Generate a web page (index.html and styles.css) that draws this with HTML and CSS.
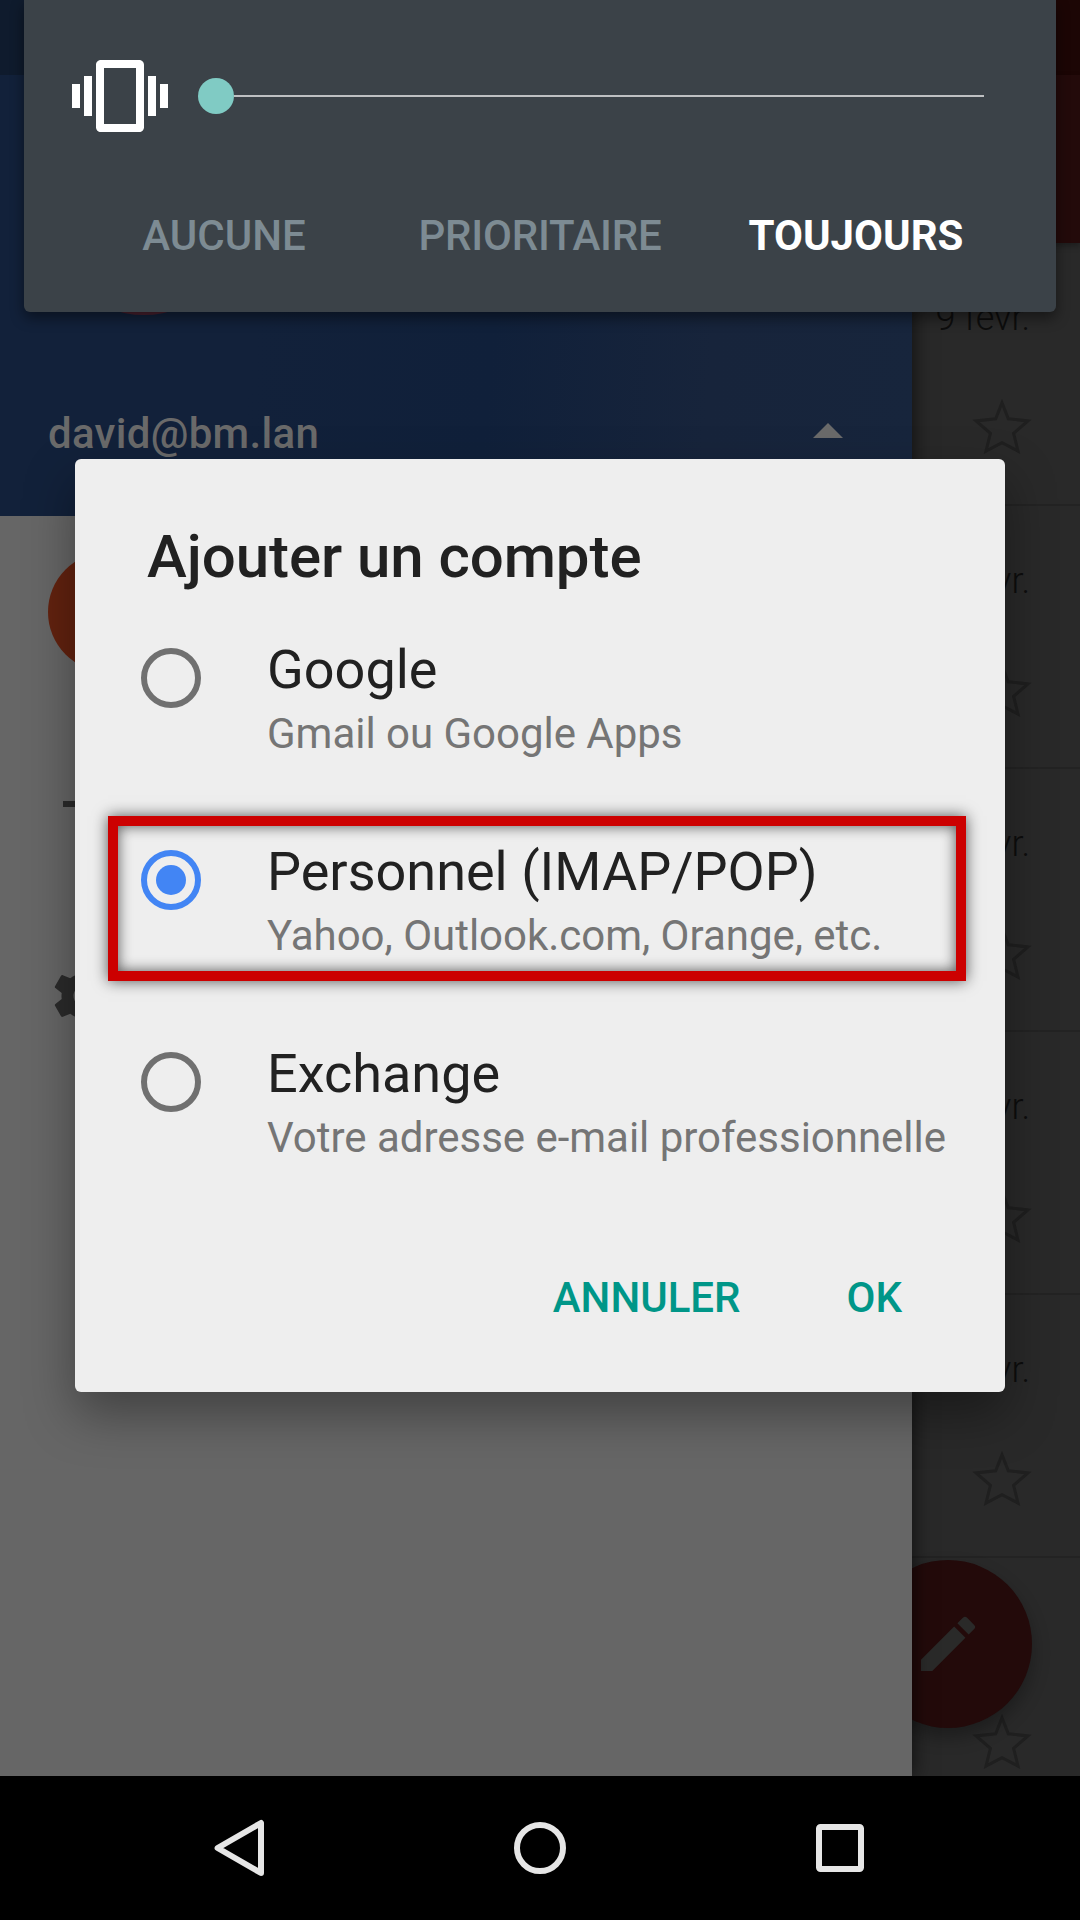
FILE: index.html
```html
<!DOCTYPE html>
<html lang="fr">
<head>
<meta charset="utf-8">
<title>Ajouter un compte</title>
<link rel="stylesheet" href="styles.css">
</head>
<body>
<svg class="defs" aria-hidden="true">
  <symbol id="star" viewBox="0 0 72 72">
    <path d="M36 11.800 42.300 27.800 62 29.900 47.600 42.400 52 60 36 51.600 20 60 24.400 42.400 10 29.900 29.700 27.800Z" fill="none" stroke="#1f1f1f" stroke-width="3" stroke-miterlimit="10"/>
  </symbol>
</svg>
<div class="screen">
  <main class="mail">
    <div class="status-strip"></div>
    <div class="toolbar"></div>
    <ul class="messages">
      <li class="message"><span class="date">9 févr.</span><svg class="star"><use href="#star"/></svg></li>
      <li class="message"><span class="date">9 févr.</span><svg class="star"><use href="#star"/></svg></li>
      <li class="message"><span class="date">9 févr.</span><svg class="star"><use href="#star"/></svg></li>
      <li class="message"><span class="date">9 févr.</span><svg class="star"><use href="#star"/></svg></li>
      <li class="message"><span class="date">9 févr.</span><svg class="star"><use href="#star"/></svg></li>
      <li class="message"><span class="date"></span><svg class="star"><use href="#star"/></svg></li>
    </ul>
    <div class="fab">
      <svg class="icon" viewBox="0 0 24 24"><path d="M3 17.25V21h3.75L17.81 9.94l-3.75-3.75L3 17.25zM20.71 7.04a1 1 0 0 0 0-1.41l-2.34-2.34a1 1 0 0 0-1.41 0l-1.83 1.83 3.75 3.75 1.83-1.83z" fill="#2a2a29"/></svg>
    </div>
  </main>

  <aside class="drawer">
    <header class="profile">
      <div class="profile-status"></div>
      <div class="avatar"></div>
      <div class="account">
        <span class="address">david@bm.lan</span>
        <svg class="caret" viewBox="0 0 30 15"><path d="M0 15 15 0l15 15z" fill="#6a6a6a"/></svg>
      </div>
    </header>
    <nav class="drawer-items">
      <div class="drawer-item"><span class="account-dot"></span></div>
      <div class="drawer-item"><svg class="icon" viewBox="0 0 24 24"><path d="M19 13h-6v6h-2v-6H5v-2h6V5h2v6h6v2z" fill="#2b2b2b"/></svg></div>
      <div class="drawer-item"><svg class="icon" viewBox="0 0 24 24"><path d="M19.43 12.98c.04-.32.07-.64.07-.98s-.03-.66-.07-.98l2.11-1.65c.19-.15.24-.42.12-.64l-2-3.46c-.12-.22-.39-.3-.61-.22l-2.49 1c-.52-.4-1.08-.73-1.69-.98l-.38-2.65C14.46 2.18 14.25 2 14 2h-4c-.25 0-.46.18-.49.42l-.38 2.65c-.61.25-1.17.59-1.69.98l-2.49-1c-.23-.09-.49 0-.61.22l-2 3.46c-.13.22-.07.49.12.64l2.11 1.65c-.04.32-.07.65-.07.98s.03.66.07.98l-2.11 1.65c-.19.15-.24.42-.12.64l2 3.46c.12.22.39.3.61.22l2.49-1c.52.4 1.08.73 1.69.98l.38 2.65c.03.24.24.42.49.42h4c.25 0 .46-.18.49-.42l.38-2.65c.61-.25 1.17-.59 1.69-.98l2.49 1c.23.09.49 0 .61-.22l2-3.46c.12-.22.07-.49-.12-.64l-2.11-1.65zM12 15.5c-1.93 0-3.5-1.57-3.5-3.5s1.57-3.5 3.5-3.5 3.5 1.57 3.5 3.5-1.57 3.5-3.5 3.5z" fill="#2b2b2b"/></svg></div>
    </nav>
  </aside>

  <section class="dialog" role="dialog">
    <h1 class="dialog-title">Ajouter un compte</h1>
    <div class="options">
      <div class="option">
        <span class="radio"></span>
        <div class="labels"><div class="name">Google</div><div class="hint">Gmail ou Google Apps</div></div>
      </div>
      <div class="option">
        <span class="radio checked"></span>
        <div class="labels"><div class="name">Personnel (IMAP/POP)</div><div class="hint">Yahoo, Outlook.com, Orange, etc.</div></div>
        <div class="highlight"></div>
      </div>
      <div class="option">
        <span class="radio"></span>
        <div class="labels"><div class="name">Exchange</div><div class="hint">Votre adresse e-mail professionnelle</div></div>
      </div>
    </div>
    <div class="actions"><span>ANNULER</span><span>OK</span></div>
  </section>

  <section class="volume">
    <div class="slider-row">
      <svg class="vibrate" viewBox="0 0 24 24"><path d="M0 15h2V9H0v6zm3 2h2V7H3v10zm19-8v6h2V9h-2zm-3 8h2V7h-2v10zM16.800 3H7.200C6.540 3 6 3.540 6 4.200v15.600C6 20.460 6.540 21 7.200 21h9.600c.66 0 1.200-.54 1.200-1.200V4.200C18 3.540 17.460 3 16.800 3zM16 19H8V5h8v14z" fill="#fff"/></svg>
      <div class="slider"><span class="thumb"></span><span class="track"></span></div>
    </div>
    <div class="modes">
      <span class="mode">AUCUNE</span>
      <span class="mode priority">PRIORITAIRE</span>
      <span class="mode active">TOUJOURS</span>
    </div>
  </section>

  <footer class="navbar">
    <svg class="nav-icon" viewBox="0 0 72 72"><path d="M57 11v50L13.600 36z" fill="none" stroke="#e6e6e6" stroke-width="6" stroke-linejoin="round"/></svg>
    <svg class="nav-icon" viewBox="0 0 72 72"><circle cx="36" cy="36" r="23" fill="none" stroke="#e6e6e6" stroke-width="6"/></svg>
    <svg class="nav-icon" viewBox="0 0 72 72"><rect x="15" y="15" width="42" height="42" rx="1.500" fill="none" stroke="#e6e6e6" stroke-width="6"/></svg>
  </footer>
</div>
</body>
</html>
```
FILE: styles.css
```css
* { box-sizing: border-box; }
body { margin: 0; background: #000; font-family: Roboto, "Liberation Sans", sans-serif; }
.defs { display: none; }
.screen { position: relative; width: 1080px; height: 1920px; overflow: hidden; display: flex; flex-direction: column; }
.icon { display: block; width: 72px; height: 72px; }

/* Mail list behind the drawer */
.mail { position: relative; height: 1776px; overflow: hidden; background: #292929; }
.status-strip { height: 75px; background: #1c0605; }
.toolbar { height: 168px; background: #230a0a; box-shadow: 0 3px 6px rgba(0, 0, 0, .3); }
.messages { list-style: none; margin: 0; padding: 0; }
.message { height: 263px; padding: 53px 42px 0 0; border-bottom: 2px solid #232323; display: flex; flex-direction: column; align-items: flex-end; }
.date { height: 44px; margin-right: 8px; font-size: 36px; line-height: 44px; font-weight: 300; color: #0d0d0d; }
.star { display: block; width: 72px; height: 72px; margin-top: 51px; flex: none; }
.fab { position: absolute; left: 864px; top: 1560px; width: 168px; height: 168px; border-radius: 50%; background: #230a0a; box-shadow: 0 9px 18px rgba(0, 0, 0, .3); display: flex; align-items: center; justify-content: center; }

/* Navigation drawer */
.drawer { position: absolute; left: 0; top: 0; width: 912px; height: 1776px; background: #666; box-shadow: 0 0 20px rgba(0, 0, 0, .7); clip-path: inset(0 -60px 0 0); }
.profile { height: 516px; background: linear-gradient(95deg, #12213a 0, #12213a 280px, #10203a 520px, #17243b 740px, #17253c 100%); display: flex; flex-direction: column; }
.profile-status { height: 75px; background: #0f1b2d; }
.avatar { width: 192px; height: 192px; margin: 48px 0 0 48px; border-radius: 50%; background: #4c2130; }
.account { display: flex; justify-content: space-between; align-items: center; height: 60px; margin: 89px 69px 0 48px; font-size: 42px; line-height: 60px; font-weight: 500; color: #6a6a6a; }
.address { letter-spacing: .3px; }
.caret { width: 30px; height: 15px; margin-bottom: 7px; }
.drawer-item { height: 192px; padding-left: 48px; display: flex; align-items: center; }
.account-dot { width: 120px; height: 120px; border-radius: 50%; background: #62220f; }

/* Account type dialog */
.dialog { position: absolute; left: 75px; top: 459px; width: 930px; height: 933px; border-radius: 6px; background: #eee; box-shadow: 0 22px 50px rgba(0, 0, 0, .36); padding-top: 63px; }
.dialog-title { margin: 0 0 0 72px; font-size: 60px; line-height: 70px; font-weight: 500; letter-spacing: -.07px; color: #212121; }
.options { margin-top: 42px; }
.option { position: relative; height: 202px; display: flex; align-items: flex-start; }
.radio { flex: none; width: 60px; height: 60px; margin: 14px 66px 0 66px; border: 6px solid #707070; border-radius: 50%; display: flex; align-items: center; justify-content: center; }
.radio.checked { border-color: #4285f4; }
.radio.checked::before { content: ""; width: 30px; height: 30px; border-radius: 50%; background: #4285f4; }
.labels { white-space: nowrap; }
.name { font-size: 54px; line-height: 72px; color: #212121; }
.hint { font-size: 42px; line-height: 56px; letter-spacing: -.02px; color: #757575; }
.highlight { position: absolute; left: 33px; top: -20px; width: 858px; height: 165px; border: 10px solid #c00; box-shadow: 0 0 14px rgba(0, 0, 0, .65), inset 0 0 14px rgba(0, 0, 0, .65); }
.actions { display: flex; justify-content: flex-end; gap: 106px; margin: 33px 103px 0 0; font-size: 42px; line-height: 50px; font-weight: 500; color: #009688; }

/* Volume panel */
.volume { position: absolute; left: 24px; top: 0; width: 1032px; height: 312px; border-radius: 0 0 6px 6px; background: #3b4248; box-shadow: 0 6px 14px rgba(0, 0, 0, .45); padding-top: 48px; }
.slider-row { display: flex; align-items: center; padding: 0 72px 0 48px; height: 96px; }
.vibrate { width: 96px; height: 96px; }
.slider { flex: 1; display: flex; align-items: center; margin-left: 30px; }
.thumb { width: 36px; height: 36px; border-radius: 50%; background: #80cbc4; }
.track { flex: 1; height: 2px; background: #bec0c2; }
.modes { display: grid; grid-template-columns: repeat(3, 316px); justify-content: center; margin-top: 67px; font-size: 42px; line-height: 50px; font-weight: 500; text-align: center; color: #7d8b93; }
.priority { letter-spacing: -.2px; }
.active { color: #fff; font-weight: 700; }

/* System navigation */
.navbar { height: 144px; background: #000; display: flex; justify-content: center; align-items: center; gap: 228px; }
.nav-icon { width: 72px; height: 72px; }
```
